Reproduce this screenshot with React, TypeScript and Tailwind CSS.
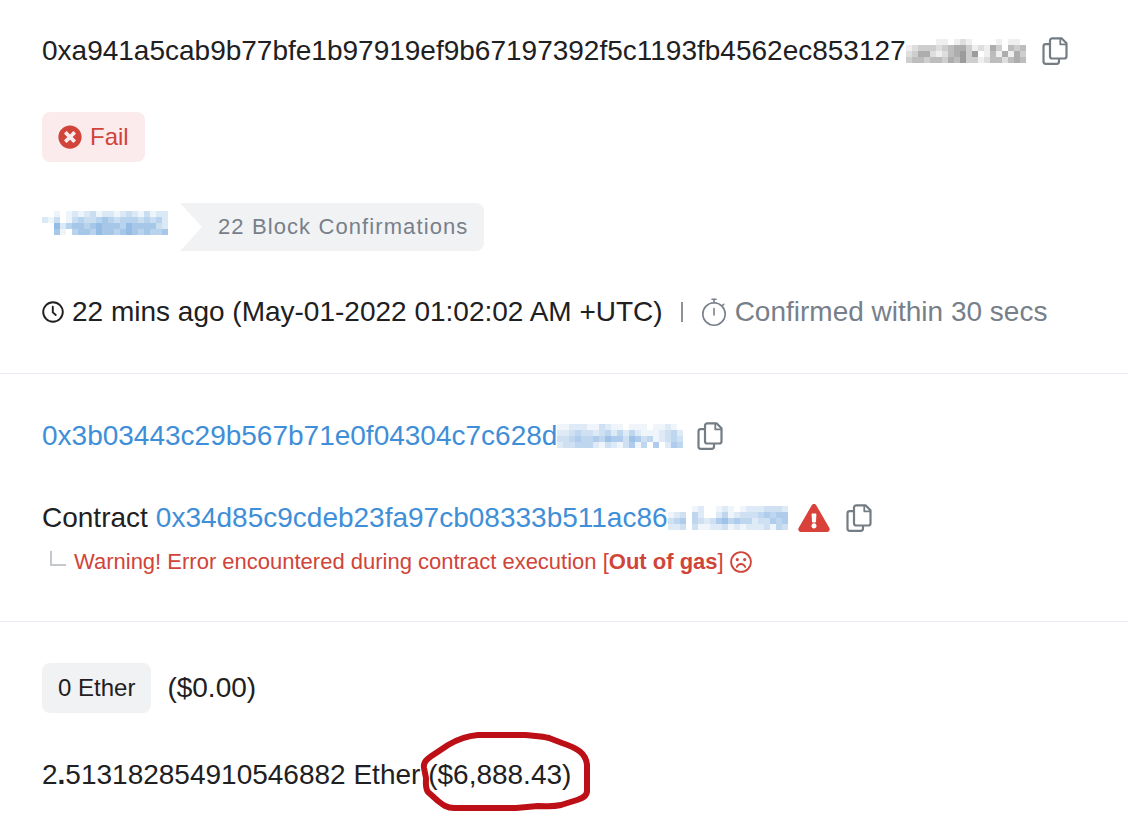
import React from "react";
import { FaExclamationTriangle, FaTimesCircle } from "react-icons/fa";

const CELL = 6;

// Each digit is the strength (0-9) of one mosaic cell.
const HASH_MASK = [
  "00000110121000010110",
  "12333234553121530434",
  "23552124563601415153",
  "34434435463312442454",
];
const BLOCK_MASK = [
  "001012123122123213122",
  "213013433454344434342",
  "006245545655546555532",
  "005104554655456545445",
];
const FROM_MASK = [
  "112221132110111011210",
  "223433234242421112342",
  "334544546553653412343",
  "233444213213514050254",
];
const TO_MASK = [
  "00001200121012223332",
  "12304200241233345455",
  "34504323564544233545",
  "22303112231212223143",
];

type MosaicProps = { rows: string[]; className: string };

function Mosaic({ rows, className }: MosaicProps) {
  const width = rows[0].length * CELL;
  const height = rows.length * CELL;
  return (
    <svg
      width={width}
      height={height}
      viewBox={`0 0 ${width} ${height}`}
      shapeRendering="crispEdges"
      fill="currentColor"
      aria-hidden="true"
      className={`shrink-0 ${className}`}
    >
      {rows.map((row, y) =>
        row.split("").map((level, x) => (
          <rect
            key={`${x}-${y}`}
            x={x * CELL}
            y={y * CELL}
            width={CELL}
            height={CELL}
            opacity={Number(level) / 9}
          />
        )),
      )}
    </svg>
  );
}

function CopyButton({ label }: { label: string }) {
  return (
    <button type="button" aria-label={label} className="shrink-0 text-[#747c84]">
      <svg
        viewBox="0 0 26 28"
        fill="none"
        stroke="currentColor"
        strokeWidth="2.2"
        strokeLinejoin="round"
        aria-hidden="true"
        className="h-7 w-[26px]"
      >
        <path d="M8 7.2H3.8A2.3 2.3 0 0 0 1.5 9.5V24.5A2.3 2.3 0 0 0 3.8 26.8H14.7A2.3 2.3 0 0 0 17 24.5V22" />
        <path d="M10.3 1.3H19.5L24.5 6.3V19.2A2.3 2.3 0 0 1 22.2 21.5H10.3A2.3 2.3 0 0 1 8 19.2V3.6A2.3 2.3 0 0 1 10.3 1.3Z" />
        <path d="M18.3 1.8V7.4H24" strokeWidth="1.8" />
      </svg>
    </button>
  );
}

function Clock() {
  return (
    <svg
      viewBox="0 0 22 22"
      fill="none"
      stroke="currentColor"
      strokeWidth="1.9"
      strokeLinecap="round"
      strokeLinejoin="round"
      aria-hidden="true"
      className="mr-2 size-[22px] shrink-0"
    >
      <circle cx="11" cy="11" r="9.8" />
      <path d="M10.8 5.8v5.6l3 2.6" />
    </svg>
  );
}

function Frown() {
  return (
    <svg
      viewBox="0 0 22 22"
      fill="none"
      stroke="currentColor"
      strokeWidth="1.8"
      strokeLinecap="round"
      strokeLinejoin="round"
      aria-hidden="true"
      className="ml-1.5 size-[22px] shrink-0"
    >
      <circle cx="11" cy="11" r="9.9" />
      <path d="M6.8 16c1-2.2 2.5-3 4.2-3s3.200.8 4.200 3" />
      <circle cx="7.300" cy="8.600" r="0.700" />
      <circle cx="14.700" cy="8.600" r="0.700" />
    </svg>
  );
}

function Stopwatch() {
  return (
    <svg
      viewBox="0 0 26 28"
      fill="none"
      stroke="currentColor"
      strokeWidth="1.6"
      strokeLinecap="round"
      aria-hidden="true"
      className="h-7 w-[26px] shrink-0"
    >
      <circle cx="13" cy="16" r="11.2" />
      <path d="M11 1.200h4M13 1.500V5M21.500 7.500l1.200-1.200M13 10.500v6.500" />
    </svg>
  );
}

function Amount() {
  return (
    <span className="relative">
      ($6,888.43)
      <svg
        viewBox="0 0 172 82"
        fill="none"
        stroke="#bd1016"
        strokeWidth="6"
        strokeLinecap="round"
        strokeLinejoin="round"
        aria-hidden="true"
        className="pointer-events-none absolute -top-7 -left-2 h-[82px] w-[172px] max-w-none"
      >
        <path d="M4 37C3 31 7 28 13 24L28 14C38 8 46 5 58 4L105 4C114 5 122 5 129 7L142 12C157 17 166 22 167 34L167 60C167 65 163 67 157 69L141 74C132 76 128 75 118 75L96 77L34 77C27 77 23 74 18 70L8 61C5 57 6 52 6 47Z" />
      </svg>
    </span>
  );
}

export default function App() {
  return (
    <main className="min-h-screen overflow-x-hidden bg-white font-['Liberation_Sans',Arial,sans-serif] text-[28px] leading-10 whitespace-nowrap text-[#1e2022]">
      <section className="flex flex-col items-start gap-[41px] border-b border-[#e7eaf3] px-[42px] pt-[31px] pb-[41px]">
        <div className="flex items-center">
          <span>0xa941a5cab9b77bfe1b97919ef9b67197392f5c1193fb4562ec853127</span>
          <Mosaic rows={HASH_MASK} className="text-[#6b6b6b]" />
          <span className="ml-4 flex">
            <CopyButton label="Copy transaction hash" />
          </span>
        </div>

        <div className="flex h-[50px] items-center gap-2 rounded-lg bg-[#fcebec] px-4 text-2xl text-[#d0443a]">
          <FaTimesCircle className="size-6" />
          Fail
        </div>

        <div className="flex items-center gap-3">
          <a href="#block" aria-label="Block" className="block pb-2">
            <Mosaic rows={BLOCK_MASK} className="text-[#5f9bd6]" />
          </a>
          <div className="flex h-12 items-center rounded-r-lg bg-[#f1f2f4] pr-4 pl-[38px] text-[22px] tracking-wider text-[#77808a] [clip-path:polygon(0_0,100%_0,100%_100%,0_100%,22px_50%)]">
            22 Block Confirmations
          </div>
        </div>

        <div className="flex items-center">
          <Clock />
          <span>22 mins ago (May-01-2022 01:02:02 AM +UTC)</span>
          <span className="mx-[18px] h-5 w-0.5 shrink-0 bg-[#8c9298]" />
          <span className="flex items-center gap-2 text-[#77808a]">
            <Stopwatch />
            Confirmed within 30 secs
          </span>
        </div>
      </section>

      <section className="flex flex-col items-start gap-[42px] border-b border-[#e7eaf3] px-[42px] pt-[42px] pb-[45px]">
        <div className="flex items-center">
          <a href="#from" className="flex items-center text-[#3f8fd8]">
            0x3b03443c29b567b71e0f04304c7c628d
            <Mosaic rows={FROM_MASK} className="text-[#6fa3dc]" />
          </a>
          <span className="ml-3.5 flex">
            <CopyButton label="Copy sender address" />
          </span>
        </div>

        <div>
          <div className="flex items-center">
            <span className="mr-2">Contract</span>
            <a href="#to" className="flex items-center text-[#3f8fd8]">
              0x34d85c9cdeb23fa97cb08333b511ac86
              <Mosaic rows={TO_MASK} className="text-[#6fa3dc]" />
            </a>
            <FaExclamationTriangle className="mr-4 ml-2.5 h-7 w-8 shrink-0 text-[#d9423a]" />
            <CopyButton label="Copy contract address" />
          </div>
          <p className="mt-2.5 flex items-center pl-2 text-[22px] leading-7 text-[#d0443a]">
            <span className="mr-2 mb-2 h-[15px] w-4 border-b-2 border-l-2 border-[#c4c8cc]" />
            <span>
              Warning! Error encountered during contract execution [
              <strong>Out of gas</strong>]
            </span>
            <Frown />
          </p>
        </div>
      </section>

      <section className="flex flex-col items-start gap-[42px] px-[42px] pt-[41px] pb-7">
        <div className="flex items-center gap-4">
          <span className="flex h-[50px] items-center rounded-lg bg-[#f1f2f3] px-4 text-2xl">
            0 Ether
          </span>
          <span>($0.00)</span>
        </div>

        <div>
          2<strong>.</strong>513182854910546882 Ether <Amount />
        </div>
      </section>
    </main>
  );
}
